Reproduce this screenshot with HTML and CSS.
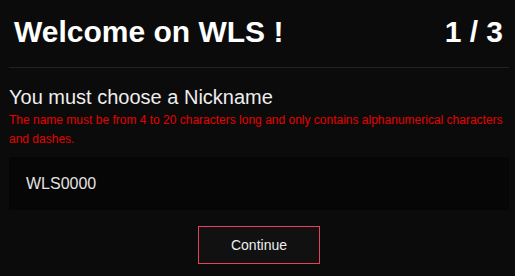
FILE: index.html
```html
<!DOCTYPE html>
<html>
<head>
<meta charset="utf-8">
<link rel="stylesheet" href="styles.css">
</head>
<body>
<div class="panel">
  <header class="header">
    <h1 class="title">Welcome on WLS !</h1>
    <span class="step">1 / 3</span>
  </header>
  <section class="form">
    <h2 class="label">You must choose a Nickname</h2>
    <p class="error">The name must be from 4 to 20 characters long and only contains alphanumerical characters and dashes.</p>
    <div class="input">WLS0000</div>
    <div class="actions">
      <button class="btn">Continue</button>
    </div>
  </section>
</div>
</body>
</html>
```

FILE: styles.css
```css
html, body {
  margin: 0;
  padding: 0;
  background: #0b0b0b;
  font-family: "Liberation Sans", Arial, sans-serif;
}
.panel {
  width: 500px;
  margin-left: 9px;
}
.header {
  display: flex;
  justify-content: space-between;
  align-items: baseline;
  padding: 15px 6px 18px 5px;
  border-bottom: 1px solid #222;
}
.title, .step {
  margin: 0;
  font-size: 30px;
  line-height: 34px;
  font-weight: bold;
  color: #fff;
}
.form {
  padding-top: 17px;
}
.label {
  margin: 0;
  font-size: 20px;
  line-height: 24px;
  font-weight: normal;
  color: #eee;
}
.error {
  margin: 2px 0 0;
  font-size: 12px;
  line-height: 19px;
  color: #e60000;
}
.input {
  margin-top: 8px;
  height: 53px;
  box-sizing: border-box;
  padding-left: 17px;
  display: flex;
  align-items: center;
  background: #060606;
  color: #e2e2e2;
  font-size: 16px;
}
.actions {
  display: flex;
  justify-content: center;
  margin-top: 16px;
}
.btn {
  width: 122px;
  height: 38px;
  background: #111;
  border: 1px solid #e8405a;
  color: #eee;
  font-family: "Liberation Sans", Arial, sans-serif;
  font-size: 14px;
  padding: 0;
}
```
